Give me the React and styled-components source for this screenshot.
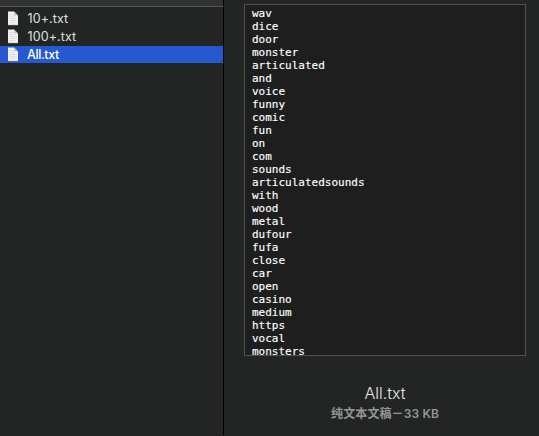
import React from "react";
import styled, { createGlobalStyle } from "styled-components";

const GlobalStyle = createGlobalStyle`
  * { box-sizing: border-box; }
  body { margin: 0; background: #232525; overflow: hidden; }
`;

const Window = styled.div`
  display: grid;
  grid-template-columns: 224px 1fr;
  width: 539px;
  height: 436px;
  background: #232525;
  border-bottom: 1px solid #202123;
  font-family: Inter, "Noto Sans CJK SC", sans-serif;
  overflow: hidden;
`;

const FileColumn = styled.div`
  border-right: 1px solid #000;
`;

const ColumnHeader = styled.div`
  height: 7px;
  background: #303231;
  border-bottom: 1px solid #565857;
`;

const FileList = styled.div`
  display: flex;
  flex-direction: column;
  gap: 1px;
  padding-top: 3px;
`;

const FileRow = styled.div`
  display: flex;
  align-items: center;
  height: 17px;
  padding-left: 7px;
  gap: 8px;
  background: ${(p) => (p.$selected ? "#2459cf" : "transparent")};
  color: ${(p) => (p.$selected ? "#fff" : "#dfe0e0")};
`;

const FileName = styled.span`
  padding-left: ${(p) => (p.$selected ? 0 : 0.6)}px;
  font-size: 12.5px;
  line-height: 17px;
  font-weight: ${(p) => (p.$selected ? 500 : 400)};
  letter-spacing: ${(p) => (p.$selected ? -0.4 : 0.08)}px;
  white-space: nowrap;
`;

const Icon = styled.svg`
  display: block;
  flex: none;
`;

const PreviewColumn = styled.div`
  display: flex;
  flex-direction: column;
  align-items: center;
  padding: 4px 13px 0 20px;
`;

const TextPreview = styled.pre`
  width: 282px;
  height: 352px;
  margin: 0;
  padding: 2px 7px 0;
  border: 1px solid #505151;
  background: #1e1e1e;
  color: #fff;
  font: 11px/13px "DejaVu Sans Mono", monospace;
  -webkit-text-stroke: 0.15px #fff;
  overflow: hidden;
`;

const PreviewTitle = styled.div`
  margin-top: 27px;
  font-size: 16px;
  line-height: 21px;
  font-weight: 300;
  letter-spacing: 0;
  color: #e4e5e5;
`;

const PreviewMeta = styled.div`
  margin-top: 1px;
  font-size: 12px;
  line-height: 18px;
  font-weight: 600;
  letter-spacing: 0.12px;
  color: #959696;
  white-space: nowrap;
`;

const files = [
  { name: "10+.txt" },
  { name: "100+.txt" },
  { name: "All.txt", selected: true },
];

const words = [
  "wav", "dice", "door", "monster", "articulated", "and", "voice", "funny",
  "comic", "fun", "on", "com", "sounds", "articulatedsounds", "with", "wood",
  "metal", "dufour", "fufa", "close", "car", "open", "casino", "medium",
  "https", "vocal", "monsters",
];

function TextFileIcon() {
  return (
    <Icon width="12" height="15" viewBox="0 0 12 15">
      <path d="M1 .5h6L11 4.5V14H1Z" fill="#f1f1f1" />
      <path d="M7 .5v4H11Z" fill="#c5c7c8" />
      <path
        d="M2.5 3.5h3.5M2.5 5.5h4M2.5 7.5h7M2.5 9.5h7M2.5 11.5h5"
        stroke="#d4d4d4"
        strokeWidth=".6"
      />
      <path d="M1 14.2h10" stroke="#8a8c8c" strokeWidth=".5" />
    </Icon>
  );
}

export default function App() {
  return (
    <>
      <GlobalStyle />
      <Window>
        <FileColumn>
          <ColumnHeader />
          <FileList>
            {files.map((file) => (
              <FileRow key={file.name} $selected={file.selected}>
                <TextFileIcon />
                <FileName $selected={file.selected}>{file.name}</FileName>
              </FileRow>
            ))}
          </FileList>
        </FileColumn>
        <PreviewColumn>
          <TextPreview>{words.join("\n")}</TextPreview>
          <PreviewTitle>All.txt</PreviewTitle>
          <PreviewMeta>纯文本文稿－33 KB</PreviewMeta>
        </PreviewColumn>
      </Window>
    </>
  );
}
